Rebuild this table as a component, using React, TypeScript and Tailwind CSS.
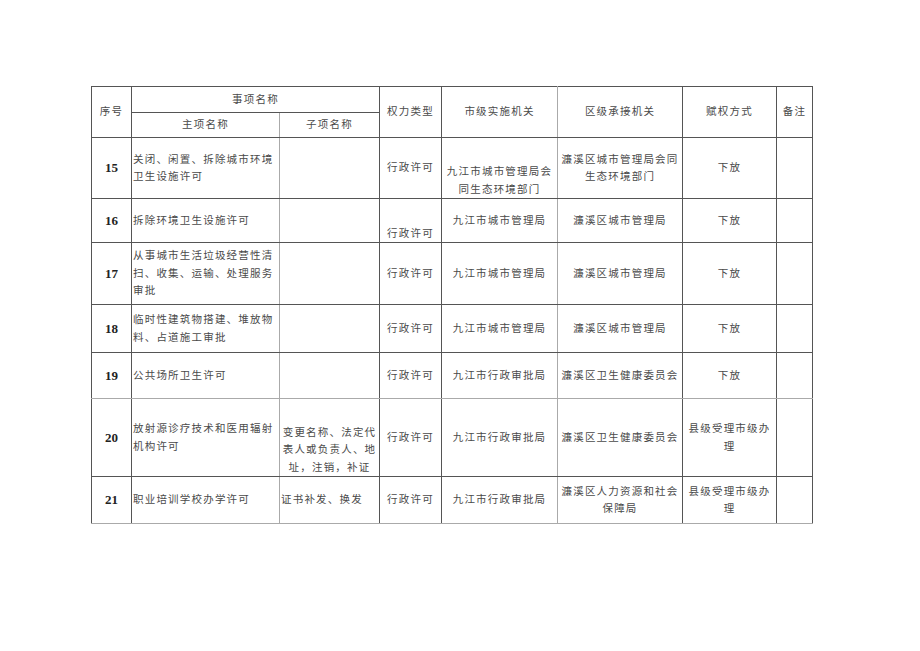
import React from 'react';

type Row = {
  no: string;
  h: string;
  main: string[];
  sub: string[];
  subBottom?: boolean;
  subLeft?: boolean;
  type: string;
  typeBottom?: boolean;
  city: string[];
  cityBottom?: boolean;
  district: string[];
  mode: string[];
  light?: boolean;
};

const rows: Row[] = [
  {
    no: '15',
    h: 'h-[61px]',
    main: ['关闭、闲置、拆除城市环境', '卫生设施许可'],
    sub: [],
    type: '行政许可',
    city: ['九江市城市管理局会', '同生态环境部门'],
    cityBottom: true,
    district: ['濂溪区城市管理局会同', '生态环境部门'],
    mode: ['下放'],
  },
  {
    no: '16',
    h: 'h-[44px]',
    main: ['拆除环境卫生设施许可'],
    sub: [],
    type: '行政许可',
    typeBottom: true,
    city: ['九江市城市管理局'],
    district: ['濂溪区城市管理局'],
    mode: ['下放'],
  },
  {
    no: '17',
    h: 'h-[62px]',
    main: ['从事城市生活垃圾经营性清', '扫、收集、运输、处理服务', '审批'],
    sub: [],
    type: '行政许可',
    city: ['九江市城市管理局'],
    district: ['濂溪区城市管理局'],
    mode: ['下放'],
  },
  {
    no: '18',
    h: 'h-[48px]',
    main: ['临时性建筑物搭建、堆放物', '料、占道施工审批'],
    sub: [],
    type: '行政许可',
    city: ['九江市城市管理局'],
    district: ['濂溪区城市管理局'],
    mode: ['下放'],
  },
  {
    no: '19',
    h: 'h-[46px]',
    main: ['公共场所卫生许可'],
    sub: [],
    type: '行政许可',
    city: ['九江市行政审批局'],
    district: ['濂溪区卫生健康委员会'],
    mode: ['下放'],
    light: true,
  },
  {
    no: '20',
    h: 'h-[78px]',
    main: ['放射源诊疗技术和医用辐射', '机构许可'],
    sub: ['变更名称、法定代', '表人或负责人、地', '址，注销，补证'],
    subBottom: true,
    type: '行政许可',
    city: ['九江市行政审批局'],
    district: ['濂溪区卫生健康委员会'],
    mode: ['县级受理市级办', '理'],
  },
  {
    no: '21',
    h: 'h-[47px]',
    main: ['职业培训学校办学许可'],
    sub: ['证书补发、换发'],
    subLeft: true,
    type: '行政许可',
    city: ['九江市行政审批局'],
    district: ['濂溪区人力资源和社会', '保障局'],
    mode: ['县级受理市级办', '理'],
    light: true,
  },
];

const Lines = ({ lines }: { lines: string[] }) => (
  <>
    {lines.map((l, i) => (
      <div key={i} className="whitespace-nowrap">
        {l}
      </div>
    ))}
  </>
);

export default function App() {
  const cell = 'border border-[#555] p-0';

  return (
    <div className="min-h-[651px] bg-white pt-[86px] pl-[91px] font-['Liberation_Serif','Noto_Sans_CJK_SC',serif] text-[#4a4a4a]">
      <table className="w-[722px] table-fixed border-collapse text-[10.5px] leading-[17.5px] tracking-[1.2px]">
        <colgroup>
          <col className="w-[40px]" />
          <col className="w-[148px]" />
          <col className="w-[100px]" />
          <col className="w-[62px]" />
          <col className="w-[116px]" />
          <col className="w-[125px]" />
          <col className="w-[94px]" />
          <col className="w-[36px]" />
        </colgroup>
        <thead>
          <tr className="h-[26px]">
            <th rowSpan={2} className={`${cell} text-center align-middle font-normal`}>序号</th>
            <th colSpan={2} className={`${cell} text-center align-middle font-normal`}>事项名称</th>
            <th rowSpan={2} className={`${cell} text-center align-middle font-normal`}>权力类型</th>
            <th rowSpan={2} className={`${cell} border-r-[#aaa] text-center align-middle font-normal`}>市级实施机关</th>
            <th rowSpan={2} className={`${cell} text-center align-middle font-normal`}>区级承接机关</th>
            <th rowSpan={2} className={`${cell} text-center align-middle font-normal`}>赋权方式</th>
            <th rowSpan={2} className={`${cell} text-center align-middle font-normal`}>备注</th>
          </tr>
          <tr className="h-[25px]">
            <th className={`${cell} border-r-[#aaa] text-center align-middle font-normal`}>主项名称</th>
            <th className={`${cell} text-center align-middle font-normal`}>子项名称</th>
          </tr>
        </thead>
        <tbody>
          {rows.map((r) => {
            const b = r.light ? 'border-b-[#aaa]' : '';
            return (
              <tr key={r.no} className={r.h}>
                <td className={`${cell} ${b} text-center align-middle text-[13px] font-bold tracking-normal text-[#222]`}>{r.no}</td>
                <td className={`${cell} ${b} border-r-[#aaa] pl-px text-left align-middle`}>
                  <Lines lines={r.main} />
                </td>
                <td
                  className={`${cell} ${b} ${r.subBottom ? 'align-bottom' : 'align-middle'} ${
                    r.subLeft ? 'pl-px text-left' : 'text-center'
                  }`}
                >
                  <Lines lines={r.sub} />
                </td>
                <td className={`${cell} ${b} text-center ${r.typeBottom ? 'align-bottom' : 'align-middle'}`}>{r.type}</td>
                <td className={`${cell} ${b} border-r-[#aaa] text-center ${r.cityBottom ? 'align-bottom' : 'align-middle'}`}>
                  <Lines lines={r.city} />
                </td>
                <td className={`${cell} ${b} text-center align-middle`}>
                  <Lines lines={r.district} />
                </td>
                <td className={`${cell} ${b} text-center align-middle`}>
                  <Lines lines={r.mode} />
                </td>
                <td className={`${cell} ${b}`}></td>
              </tr>
            );
          })}
        </tbody>
      </table>
    </div>
  );
}
